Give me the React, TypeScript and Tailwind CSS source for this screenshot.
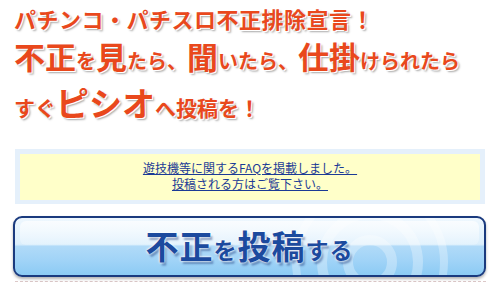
const jp = "font-['Noto_Sans_CJK_JP','Noto_Sans',sans-serif]";

function Headline() {
  return (
    <div className="pl-[14px] pt-[3px] font-bold text-[#e9481c] [text-shadow:1px_1px_0_#fff,2px_2px_2px_rgba(0,0,0,0.35)]">
      <p className="text-[22px] leading-[30px] tracking-[0.5px]">
        パチンコ・パチスロ不正排除宣言！
      </p>
      <p className="text-[20px] leading-[46px] whitespace-nowrap">
        <span className="text-[31px]">不正</span>を
        <span className="text-[31px]">見</span>たら、
        <span className="text-[31px]">聞</span>いたら、
        <span className="text-[31px]">仕掛</span>けられたら
      </p>
      <p className="text-[21px] leading-[36px] whitespace-nowrap">
        すぐ<span className="text-[33px]">ピシオ</span>へ投稿を！
      </p>
    </div>
  );
}

function FaqBox() {
  return (
    <div className="mx-[15px] mt-[24px] bg-[#e5f0fb] px-[5px] pt-[5px] pb-[4px]">
      <div className="h-[46px] bg-[#ffffc9] pt-[6px] text-center text-[12px] leading-[16px]">
        <a href="#" className="text-[#1b3a96] underline">
          遊技機等に関するFAQを掲載しました。
          <br />
          投稿される方はご覧下さい。
        </a>
      </div>
    </div>
  );
}

function PostButton() {
  return (
    <div className="mx-[13px] mt-[12px] w-[473px]">
      <button className="relative w-full h-[61px] overflow-hidden rounded-[9px] border-2 border-[#1a3a7e] bg-[linear-gradient(to_bottom,#eef7fe_0%,#dceffc_46%,#b0daf8_50%,#a0d3f7_75%,#8ccbf4_100%)] shadow-[0_2px_3px_rgba(0,0,0,0.3)]">
        <div className="absolute left-[5px] right-[5px] top-[3px] h-[24px] rounded-[6px] bg-[linear-gradient(to_bottom,rgba(255,255,255,0.7),rgba(255,255,255,0.2))]" />
        <svg
          className="absolute left-0 top-0"
          width="469"
          height="57"
          viewBox="0 0 469 57"
        >
          <g fill="none" stroke="#ffffff" strokeOpacity="0.3">
            <circle cx="355" cy="44" r="22" strokeWidth="10" />
            <circle cx="355" cy="44" r="48" strokeWidth="10" />
            <circle cx="355" cy="44" r="74" strokeWidth="8" />
          </g>
        </svg>
        <span className="relative font-bold text-[#1c4a9e] text-[23px] leading-none tracking-[1px] [text-shadow:0_0_2px_#fff,0_0_3px_#fff,2px_3px_2px_rgba(20,50,120,0.45)]">
          <span className="text-[33px]">不正</span>を
          <span className="text-[33px]">投稿</span>する
        </span>
      </button>
      <div className="mt-[4px] ml-[2px] border-t border-dashed border-[#dcc8c8]" />
    </div>
  );
}

export default function App() {
  return (
    <div className={`w-[500px] h-[294px] overflow-hidden bg-white ${jp}`}>
      <Headline />
      <FaqBox />
      <PostButton />
    </div>
  );
}
